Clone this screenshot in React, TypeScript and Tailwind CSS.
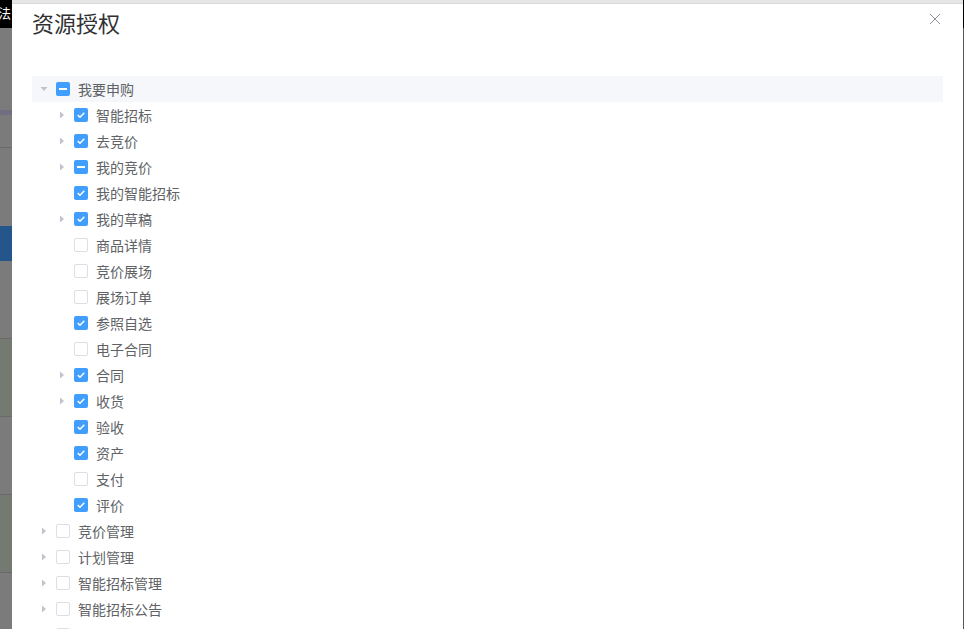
import React from "react";

type Node = {
  label: string;
  level: number;
  state: "checked" | "half" | "none";
  caret: "open" | "closed" | "leaf";
  active?: boolean;
};

const nodes: Node[] = [
  { label: "我要申购", level: 0, state: "half", caret: "open", active: true },
  { label: "智能招标", level: 1, state: "checked", caret: "closed" },
  { label: "去竞价", level: 1, state: "checked", caret: "closed" },
  { label: "我的竞价", level: 1, state: "half", caret: "closed" },
  { label: "我的智能招标", level: 1, state: "checked", caret: "leaf" },
  { label: "我的草稿", level: 1, state: "checked", caret: "closed" },
  { label: "商品详情", level: 1, state: "none", caret: "leaf" },
  { label: "竞价展场", level: 1, state: "none", caret: "leaf" },
  { label: "展场订单", level: 1, state: "none", caret: "leaf" },
  { label: "参照自选", level: 1, state: "checked", caret: "leaf" },
  { label: "电子合同", level: 1, state: "none", caret: "leaf" },
  { label: "合同", level: 1, state: "checked", caret: "closed" },
  { label: "收货", level: 1, state: "checked", caret: "closed" },
  { label: "验收", level: 1, state: "checked", caret: "leaf" },
  { label: "资产", level: 1, state: "checked", caret: "leaf" },
  { label: "支付", level: 1, state: "none", caret: "leaf" },
  { label: "评价", level: 1, state: "checked", caret: "leaf" },
  { label: "竞价管理", level: 0, state: "none", caret: "closed" },
  { label: "计划管理", level: 0, state: "none", caret: "closed" },
  { label: "智能招标管理", level: 0, state: "none", caret: "closed" },
  { label: "智能招标公告", level: 0, state: "none", caret: "closed" },
  // last row is cut off by the window, only the box edge shows
  { label: "", level: 0, state: "none", caret: "closed" },
];

function Caret({ kind }: { kind: Node["caret"] }) {
  return (
    <span className="w-[24px] h-[24px] flex items-center justify-center shrink-0">
      {kind !== "leaf" && (
        <svg
          width="12"
          height="12"
          viewBox="0 0 12 12"
          className={kind === "open" ? "rotate-90" : ""}
        >
          <path d="M4 2.5 L8 6 L4 9.5 Z" fill="#c0c4cc" />
        </svg>
      )}
    </span>
  );
}

function Checkbox({ state }: { state: Node["state"] }) {
  if (state === "none") {
    return (
      <span className="w-[14px] h-[14px] rounded-[2px] border border-[#dcdfe6] bg-white shrink-0" />
    );
  }
  return (
    <span className="w-[14px] h-[14px] rounded-[2px] bg-[#409eff] flex items-center justify-center shrink-0">
      {state === "checked" ? (
        <svg width="14" height="14" viewBox="0 0 14 14">
          <path
            d="M3.8 7.1 L6 9.2 L10.3 4.7"
            fill="none"
            stroke="white"
            strokeWidth="1.5"
          />
        </svg>
      ) : (
        <span className="w-[8px] h-[2px] bg-white" />
      )}
    </span>
  );
}

function TreeRow({ node }: { node: Node }) {
  return (
    <div
      className={`h-[26px] flex items-center ${node.active ? "bg-[#f5f7fa]" : ""}`}
      style={{ paddingLeft: node.level * 18 }}
    >
      <Caret kind={node.caret} />
      <Checkbox state={node.state} />
      {node.label && (
        <span className="ml-[8px] text-[14px] text-[#606266] leading-none">
          {node.label}
        </span>
      )}
    </div>
  );
}

const stripBlocks = [
  "h-[28px] bg-black",
  "h-[82px] bg-[#7b7b7b]",
  "h-[5px] bg-[#6f6f80]",
  "h-[33px] bg-[#7b7b7b] border-b border-[#6a6a6a]",
  "h-[78px] bg-[#7b7b7b]",
  "h-[35px] bg-[#24568b]",
  "h-[78px] bg-[#7b7b7b] border-b border-[#6a6a6a]",
  "h-[78px] bg-[#747a72] border-b border-[#6a6a6a]",
  "h-[78px] bg-[#7b7b7b] border-b border-[#6a6a6a]",
  "h-[78px] bg-[#747a72] border-b border-[#6a6a6a]",
  "h-[60px] bg-[#7b7b7b]",
];

export default function App() {
  return (
    <div
      className="w-[964px] h-[629px] overflow-hidden flex bg-[#7b7b7b]"
      style={{ fontFamily: '"Noto Sans CJK SC", "Noto Sans", sans-serif' }}
    >
      <div className="w-[12px] shrink-0 flex flex-col relative">
        {stripBlocks.map((c, i) => (
          <div key={i} className={`${c} shrink-0`} />
        ))}
        <span className="absolute top-[6px] left-[-2px] text-[13px] leading-none text-white">
          法
        </span>
      </div>
      <div className="w-[951px] shrink-0 flex flex-col">
        <div className="h-[4px] bg-[#e6e6e6] border-b border-[#d9d9d9] shrink-0" />
        <div className="flex-1 bg-white flex flex-col">
          <div className="flex items-start justify-between pl-[20px] pr-[20px] pt-[3px]">
            <span className="text-[22px] leading-[30px] text-[#303133]">
              资源授权
            </span>
            <svg width="12" height="12" viewBox="0 0 12 12" className="mt-[6px] mr-[2px]">
              <path d="M1 1 L11 11 M11 1 L1 11" stroke="#909399" strokeWidth="1" />
            </svg>
          </div>
          <div className="px-[20px] pt-[39px]">
            {nodes.map((n, i) => (
              <TreeRow key={i} node={n} />
            ))}
          </div>
        </div>
      </div>
      <div className="w-[1px] shrink-0 flex flex-col">
        <div className="h-[28px] bg-black" />
        <div className="flex-1 bg-[#555]" />
      </div>
    </div>
  );
}
